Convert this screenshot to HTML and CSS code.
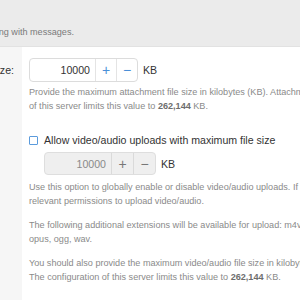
FILE: index.html
```html
<!DOCTYPE html>
<html>
<head>
<meta charset="utf-8">
<link rel="stylesheet" href="styles.css">
</head>
<body>
<header class="intro">
  <div class="intro-text"><span>Configure settings for working with messages.</span></div>
</header>
<main class="settings">
  <div class="label-col">
    <label class="field-label">Max file upload size:</label>
  </div>
  <div class="field-col">
    <div class="row">
      <div class="stepper">
        <input class="stepper-input" type="text" value="10000">
        <button class="stepper-btn">+</button>
        <button class="stepper-btn">−</button>
      </div>
      <span class="unit">KB</span>
    </div>
    <p class="help">Provide the maximum attachment file size in kilobytes (KB). Attachments larger than this size will be rejected. The configuration<br>of this server limits this value to <b>262,144</b> KB.</p>

    <label class="check-row">
      <span class="checkbox"></span>
      <span class="check-label">Allow video/audio uploads with maximum file size</span>
    </label>
    <div class="row indent">
      <div class="stepper disabled">
        <input class="stepper-input" type="text" value="10000" disabled>
        <button class="stepper-btn" disabled>+</button>
        <button class="stepper-btn" disabled>−</button>
      </div>
      <span class="unit">KB</span>
    </div>
    <p class="help gap-s">Use this option to globally enable or disable video/audio uploads. If enabled, users with the<br>relevant permissions to upload video/audio.</p>
    <p class="help gap-m">The following additional extensions will be available for upload: m4v, mp4, webm, mov, mp3, m4a,<br>opus, ogg, wav.</p>
    <p class="help gap-m">You should also provide the maximum video/audio file size in kilobytes (KB).<br>The configuration of this server limits this value to <b>262,144</b> KB.</p>
  </div>
</main>
</body>
</html>
```

FILE: styles.css
```css
html, body {
  margin: 0;
  padding: 0;
  width: 300px;
  height: 300px;
  overflow: hidden;
  background: #ffffff;
  font-family: "Liberation Sans", Arial, sans-serif;
  color: #333333;
}

.intro {
  height: 46px;
  background: #ebebeb;
  border-bottom: 1px solid #e2e2e2;
  display: flex;
  align-items: flex-end;
}

.intro-text {
  width: 74px;
  display: flex;
  justify-content: flex-end;
  white-space: nowrap;
  font-size: 9.1px;
  line-height: 14px;
  color: #7a7a7a;
  padding-bottom: 7px;
}

.settings {
  display: flex;
  height: 253px;
}

.label-col {
  width: 14px;
  padding: 11px 8px 0 0;
  background: #f6f6f6;
  display: flex;
  justify-content: flex-end;
  align-items: flex-start;
  white-space: nowrap;
}

.field-label {
  font-size: 10.6px;
  line-height: 24px;
  color: #333;
}

.field-col {
  flex: 1;
  padding: 11px 0 0 7px;
  white-space: nowrap;
  min-width: 0;
}

.row {
  display: flex;
  align-items: center;
  gap: 5px;
}

.indent {
  margin: 4px 0 0 15px;
}

.stepper {
  display: flex;
  height: 24px;
  box-sizing: border-box;
  border: 1px solid #dcdcdc;
  border-radius: 4px;
  background: #fff;
  overflow: hidden;
}

.stepper-input {
  width: 65px;
  box-sizing: border-box;
  border: 0;
  margin: 0;
  padding: 0 5px 0 0;
  text-align: right;
  font-family: inherit;
  font-size: 10.6px;
  color: #333;
  background: transparent;
}

.stepper-btn {
  width: 21px;
  border: 0;
  border-left: 1px solid #e4e4e4;
  margin: 0;
  padding: 0;
  background: transparent;
  color: #4a8fd8;
  font-family: inherit;
  font-size: 14px;
  line-height: 1;
}

.stepper.disabled {
  height: 23px;
  background: #efefef;
  border-color: #dedede;
}

.stepper.disabled .stepper-input {
  color: #8a8a8a;
  width: 66px;
}

.stepper.disabled .stepper-btn {
  width: 22px;
  color: #777;
  border-left-color: #dadada;
}

.unit {
  font-size: 10.6px;
  color: #333;
}

.help {
  margin: 3px 0 0;
  font-size: 9.1px;
  line-height: 14px;
  color: #8a8a8a;
}

.help b {
  color: #6d6d6d;
}

.gap-s {
  margin-top: 5px;
}

.gap-m {
  margin-top: 10px;
}

.check-row {
  display: flex;
  align-items: center;
  gap: 6px;
  margin-top: 19px;
  height: 16px;
}

.checkbox {
  width: 9px;
  height: 9px;
  border: 1px solid #5b9bdc;
  border-radius: 1px;
  box-sizing: border-box;
  background: #fff;
}

.check-label {
  font-size: 10.6px;
  color: #333;
}
```
